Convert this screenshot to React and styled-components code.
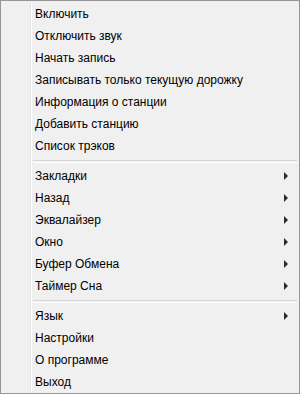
import React from "react";
import styled, { createGlobalStyle } from "styled-components";

const GlobalStyle = createGlobalStyle`
    html, body {
        margin: 0;
        padding: 0;
        background: #f0f0f0;
    }
`;

const Menu = styled.div`
    box-sizing: border-box;
    width: 300px;
    height: 394px;
    padding: 2px 2px 1px 2px;
    border: 1px solid #979797;
    background: #f0f0f0;
    font-family: "Liberation Sans", Arial, sans-serif;
    font-size: 12px;
    color: #000;
    display: flex;
    flex-direction: column;
`;

const Row = styled.div`
    display: flex;
    height: ${(p) => p.$height}px;
    flex-shrink: 0;
`;

const Gutter = styled.div`
    width: 27px;
    border-right: 1px solid #e2e3e3;
    box-shadow: 1px 0 0 #ffffff;
`;

const Label = styled.div`
    flex: 1;
    padding-left: 4px;
    line-height: 22px;
    white-space: nowrap;
`;

const Arrow = styled.div`
    align-self: center;
    width: 0;
    height: 0;
    margin-right: 9px;
    border-left: 4px solid #2b2b2b;
    border-top: 4px solid transparent;
    border-bottom: 4px solid transparent;
`;

const Rule = styled.div`
    flex: 1;
    margin: 3px 0 0 2px;
    height: 1px;
    border-top: 1px solid #d7d7d7;
    border-bottom: 1px solid #ffffff;
`;

const groups = [
    [
        { label: "Включить" },
        { label: "Отключить звук" },
        { label: "Начать запись" },
        { label: "Записывать только текущую дорожку" },
        { label: "Информация о станции" },
        { label: "Добавить станцию" },
        { label: "Список трэков" },
    ],
    [
        { label: "Закладки", sub: true },
        { label: "Назад", sub: true },
        { label: "Эквалайзер", sub: true },
        { label: "Окно", sub: true },
        { label: "Буфер Обмена", sub: true },
        { label: "Таймер Сна", sub: true },
    ],
    [
        { label: "Язык", sub: true },
        { label: "Настройки" },
        { label: "О программе" },
        { label: "Выход" },
    ],
];

function MenuItem({ label, sub }) {
    return (
        <Row $height={22}>
            <Gutter />
            <Label>{label}</Label>
            {sub && <Arrow />}
        </Row>
    );
}

function Separator() {
    return (
        <Row $height={8}>
            <Gutter />
            <Rule />
        </Row>
    );
}

export default function App() {
    return (
        <>
            <GlobalStyle />
            <Menu>
                {groups.map((group, i) => (
                    <React.Fragment key={i}>
                        {i > 0 && <Separator />}
                        {group.map((item) => (
                            <MenuItem key={item.label} {...item} />
                        ))}
                    </React.Fragment>
                ))}
            </Menu>
        </>
    );
}
